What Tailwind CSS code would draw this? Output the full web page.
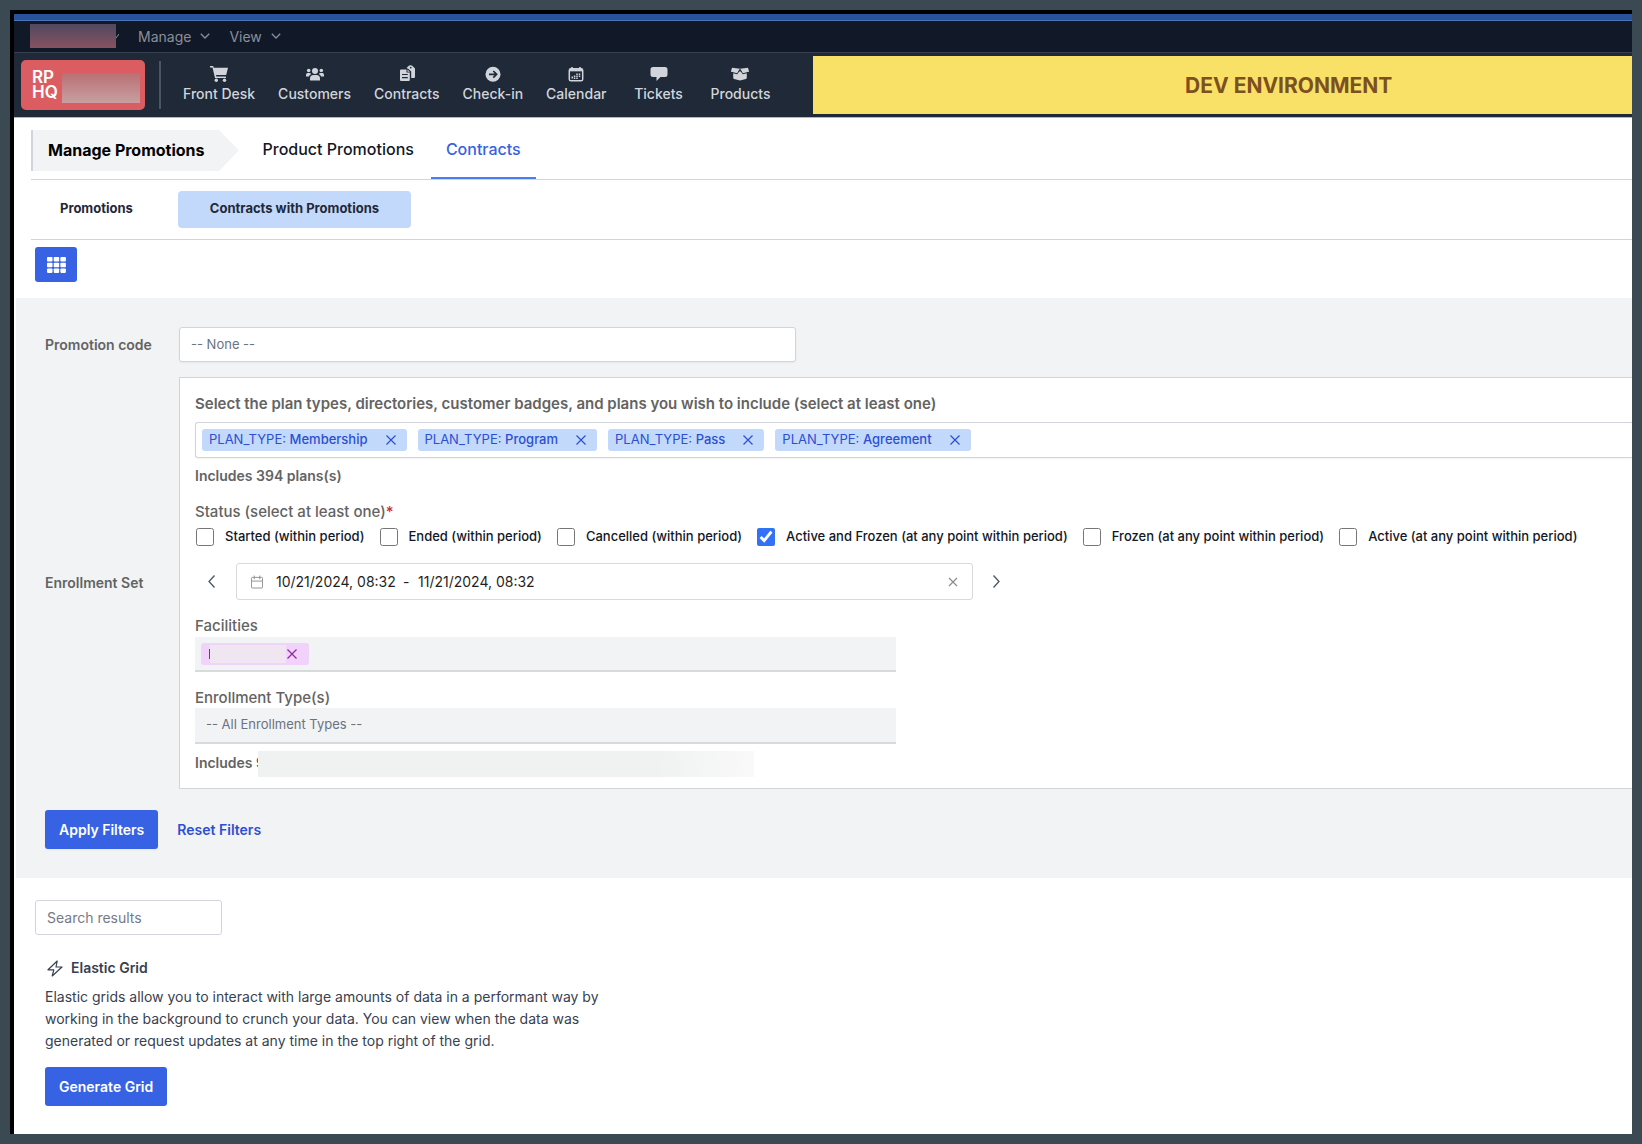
<!DOCTYPE html>
<html lang="en">
<head>
<meta charset="utf-8">
<meta name="viewport" content="width=device-width, initial-scale=1">
<title>Manage Promotions</title>
<script src="https://cdn.jsdelivr.net/npm/@tailwindcss/browser@4"></script>
</head>
<body class="flex min-h-screen flex-col bg-[#3b4a52] p-[10px] font-['Inter',sans-serif] text-[#111827]">
<div class="flex flex-1 flex-col overflow-hidden border-t-4 border-l-4 border-black bg-white">

  <!-- Top menu -->
  <header>
    <div class="h-[7px] border-b border-[#4a74b4] bg-[#28529a]"></div>
    <div class="flex h-8 items-center border-b border-[#374151] bg-[#111827] pb-px pl-4 text-[14px] text-[#8b8f98]">
      <div class="h-6 w-[86px] bg-linear-to-b from-[#51485f] to-[#85525f]"></div>
      <svg class="h-2 w-[3px]" viewBox="0 0 3 8" fill="none" stroke="currentColor"><path d="M0 6 3 2"/></svg>
      <button class="ml-[19px] flex items-center gap-[9px]">Manage
        <svg class="h-[6px] w-[10px]" viewBox="0 0 10 6" fill="none" stroke="currentColor" stroke-width="1.3"><path d="M.8.8 5 5 9.200.8"/></svg></button>
      <button class="ml-[19px] flex items-center gap-[9px]">View
        <svg class="h-[6px] w-[10px]" viewBox="0 0 10 6" fill="none" stroke="currentColor" stroke-width="1.3"><path d="M.8.8 5 5 9.200.8"/></svg></button>
    </div>

    <div class="flex h-16 items-stretch bg-[#1f2937]">
      <div class="mt-[7px] ml-[7px] flex h-[50px] w-[124px] items-center rounded-[5px] bg-[#db5d62] pl-[11px] text-[17px] leading-[15px] font-semibold text-white">
        <div class="w-[30px]"><div>RP</div><div>HQ</div></div>
        <div class="mt-[6px] h-[30px] w-[78px] bg-linear-to-b from-[#b97073] to-[#c79fa2]"></div>
      </div>
      <div class="mt-2 ml-[14px] h-12 w-[2px] bg-[#4b5563]"></div>
      <nav class="ml-[22px] flex gap-[23px] pt-3 text-[14px] leading-5 font-medium text-[#d1d5db]">
        <a href="#" class="flex flex-col items-center gap-px">
          <svg class="h-[18px] w-[18px]" viewBox="0 0 18 18" fill="currentColor"><path d="M0 1h3.200l.5 1.700H18l-1.800 7.300H6l.3 1.600h9.600v1.500H5L2.500 2.500H0z"/><circle cx="6.300" cy="15.300" r="1.700"/><circle cx="14.500" cy="15.300" r="1.700"/></svg>Front Desk</a>
        <a href="#" class="flex flex-col items-center gap-px">
          <svg class="h-[18px] w-[18px]" viewBox="0 0 18 18" fill="currentColor"><circle cx="9" cy="6" r="3"/><circle cx="2.700" cy="5.500" r="1.800"/><circle cx="15.300" cy="5.500" r="1.800"/><path d="M4 15v-1.500Q4 10 7.500 10h3Q14 10 14 13.500V15q0 .5-.5.5h-9Q4 15.500 4 15zM0 11V9.800Q0 8 1.800 8h1.800q.8 0 1.300.4L5 9.200Q3.200 10 3 11.500H.5Q0 11.500 0 11zM18 11V9.800Q18 8 16.200 8h-1.800q-.8 0-1.300.4l-.1.8q1.800.8 2 2.300h2.500q.5 0 .5-.5z"/></svg>Customers</a>
        <a href="#" class="flex flex-col items-center gap-px">
          <svg class="h-[18px] w-[18px]" viewBox="0 0 18 18"><path d="M8.500 3 10 1.500Q11 .3 12.700.3T15.500 2L17 3.500V12q0 1-1 1h-2.800V6.500L10.500 4z" fill="currentColor"/><circle cx="12.700" cy="2.600" r=".9" fill="#1f2937"/><path d="M3 4.500h5.500v3h3.300V15q0 1-1 1H3q-1 0-1-1V5.500q0-1 1-1zM9.500 4.500l2.300 2.200H9.500z" fill="currentColor"/><path d="M4 9.500h5.800M4 12.700h5.800" stroke="#1f2937" stroke-width="1.200"/></svg>Contracts</a>
        <a href="#" class="flex flex-col items-center gap-px">
          <svg class="h-[18px] w-[18px]" viewBox="0 0 18 18"><circle cx="9" cy="9.300" r="7.500" fill="currentColor"/><path d="M5 9.300h7.500M9.300 6l3.300 3.300L9.300 12.600" fill="none" stroke="#1f2937" stroke-width="1.700"/></svg>Check-in</a>
        <a href="#" class="flex flex-col items-center gap-px">
          <svg class="h-[18px] w-[18px]" viewBox="0 0 18 18" fill="none" stroke="currentColor"><rect x="2.300" y="3.800" width="13.400" height="12" rx="1.600" stroke-width="1.500"/><path d="M2.300 5.200h13.400" stroke-width="2.300"/><path d="M5 2v3M13 2v3" stroke-width="1.600"/><path d="M5.300 11.500v2.500M7.600 10.500V14M10 8.500V14M12.500 8.500v4" stroke-width="1.500" stroke-dasharray="1.500 .5"/></svg>Calendar</a>
        <a href="#" class="flex min-w-[58px] flex-col items-center gap-px">
          <svg class="h-[18px] w-[18px]" viewBox="0 0 18 18" fill="currentColor"><path d="M3 2h12q2.500 0 2.500 2.500v5q0 2.500-2.500 2.500h-4.500L6.500 16v-4H3Q.5 12 .5 9.500v-5Q.5 2 3 2z"/></svg>Tickets</a>
        <a href="#" class="flex min-w-[58px] flex-col items-center gap-px">
          <svg class="h-[18px] w-[18px]" viewBox="0 0 18 18"><path d="M2.200 6.500v6.200q0 1 .9 1.300L9 15.500l5.900-1.500q.9-.3.9-1.300V6.500z" fill="currentColor"/><path d="M1 2.800 9 3.800l8-1 1 3.400q.1.600-.5.800L12 8.500 9 4.200 6 8.500.5 7Q-.1 6.800 0 6.200z" fill="currentColor"/><path d="M.5 7.300 6.200 8.800 9 4.300l2.800 4.500 5.700-1.500" fill="none" stroke="#1f2937" stroke-width="1"/></svg>Products</a>
      </nav>
      <div class="my-[3px] ml-[43px] flex flex-1 items-center justify-center bg-[#f9e067] pt-px pl-[132px] text-[21px] font-bold text-[#7c501f]">DEV ENVIRONMENT</div>
    </div>
  </header>

  <main class="border-t border-[#b4b7bc]">
    <!-- Section tabs -->
    <nav class="ml-[17px] flex h-[62px] border-b border-[#d1d5db] pt-3 text-[16px] leading-6">
      <div class="flex h-[41px] items-center border-l-2 border-[#d1d5db] bg-[#f2f3f5] pr-[14px] pb-px pl-[15px] font-bold text-black">Manage Promotions</div>
      <svg class="h-[41px] w-5" viewBox="0 0 20 41"><path d="M0 0 20 20.500 0 41z" fill="#f2f3f5"/></svg>
      <a href="#" class="ml-2 h-[49px] pt-[7px] pr-[17px] pl-4 font-medium">Product Promotions</a>
      <a href="#" class="h-[49px] border-b-2 border-[#4b7ef0] px-[15px] pt-[7px] font-medium text-[#3662e3]">Contracts</a>
    </nav>
    <nav class="ml-[17px] flex h-[60px] items-center border-b border-[#d1d5db] text-[13px] font-bold text-[#1f2937]">
      <a href="#" class="flex h-[37px] items-center px-[29px] pb-px">Promotions</a>
      <a href="#" class="ml-4 flex h-[37px] items-center rounded-[4px] bg-[#c3d9fb] px-8 pb-px">Contracts with Promotions</a>
    </nav>

    <div class="px-[21px] pt-[7px] pb-4">
      <button aria-label="Grid" class="flex h-[35px] w-[42px] items-center justify-center rounded-[3px] bg-[#3662e3] text-white">
        <svg class="h-4 w-[19px]" viewBox="0 0 19 16" fill="currentColor"><rect width="5.500" height="4.500" rx=".8"/><rect x="6.700" width="5.500" height="4.500" rx=".8"/><rect x="13.400" width="5.500" height="4.500" rx=".8"/><rect y="5.700" width="5.500" height="4.500" rx=".8"/><rect x="6.700" y="5.700" width="5.500" height="4.500" rx=".8"/><rect x="13.400" y="5.700" width="5.500" height="4.500" rx=".8"/><rect y="11.400" width="5.500" height="4.500" rx=".8"/><rect x="6.700" y="11.400" width="5.500" height="4.500" rx=".8"/><rect x="13.400" y="11.400" width="5.500" height="4.500" rx=".8"/></svg>
      </button>
    </div>

    <!-- Filters -->
    <form class="ml-[2px] bg-[#f2f3f5] pt-[29px] pb-[29px] pl-[29px]">
      <div class="flex items-center">
        <label for="promo" class="w-[134px] text-[14px] font-semibold text-[#636363]">Promotion code</label>
        <select id="promo" class="h-[35px] w-[617px] appearance-none rounded-[3px] border border-[#d1d5db] bg-white px-[11px] text-[13px] text-[#6b7280] shadow-xs"><option>-- None --</option></select>
      </div>

      <div class="mt-[15px] flex items-center">
        <div class="w-[134px] shrink-0 pb-[2px] text-[14px] font-semibold text-[#636363]">Enrollment Set</div>
        <div class="min-w-0 flex-1 border border-r-0 border-[#d1d5db] bg-white pt-4 pb-[11px] pl-[15px]">
          <div class="text-[15px] leading-5 font-semibold text-[#636363]">Select the plan types, directories, customer badges, and plans you wish to include (select at least one)</div>
          <div class="mt-2 flex h-[36px] items-center gap-[11px] rounded-l-[3px] border border-r-0 border-[#d1d5db] pl-[6px] text-[13px] text-[#2c4fd2] shadow-xs">
            <span class="flex h-[22px] items-center rounded-[3px] bg-[#c3d9fb] pr-[11px] pl-[7px]"><span>PLAN_TYPE: <span class="font-medium">Membership</span></span><button type="button" aria-label="Remove" class="ml-[18px]"><svg class="size-[10px]" viewBox="0 0 10 10" stroke="currentColor" stroke-width="1.200"><path d="m.5.5 9 9m0-9-9 9"/></svg></button></span>
            <span class="flex h-[22px] items-center rounded-[3px] bg-[#c3d9fb] pr-[11px] pl-[7px]"><span>PLAN_TYPE: <span class="font-medium">Program</span></span><button type="button" aria-label="Remove" class="ml-[18px]"><svg class="size-[10px]" viewBox="0 0 10 10" stroke="currentColor" stroke-width="1.200"><path d="m.5.5 9 9m0-9-9 9"/></svg></button></span>
            <span class="flex h-[22px] items-center rounded-[3px] bg-[#c3d9fb] pr-[11px] pl-[7px]"><span>PLAN_TYPE: <span class="font-medium">Pass</span></span><button type="button" aria-label="Remove" class="ml-[18px]"><svg class="size-[10px]" viewBox="0 0 10 10" stroke="currentColor" stroke-width="1.200"><path d="m.5.5 9 9m0-9-9 9"/></svg></button></span>
            <span class="flex h-[22px] items-center rounded-[3px] bg-[#c3d9fb] pr-[11px] pl-[7px]"><span>PLAN_TYPE: <span class="font-medium">Agreement</span></span><button type="button" aria-label="Remove" class="ml-[18px]"><svg class="size-[10px]" viewBox="0 0 10 10" stroke="currentColor" stroke-width="1.200"><path d="m.5.5 9 9m0-9-9 9"/></svg></button></span>
          </div>
          <div class="mt-2 text-[14px] leading-5 font-semibold text-[#636363]">Includes 394 plans(s)</div>

          <fieldset>
            <legend class="pt-4 text-[15px] leading-5 font-medium text-[#636363]">Status (select at least one)<span class="text-[#d12c2c]">*</span></legend>
            <div class="mt-[5px] flex h-5 items-center gap-[15px] text-[13px] font-medium whitespace-nowrap">
              <label class="flex items-center gap-[11px]"><input type="checkbox" class="ml-px size-[18px] accent-[#3273f6]">Started (within period)</label>
              <label class="flex items-center gap-[11px]"><input type="checkbox" class="size-[18px] accent-[#3273f6]">Ended (within period)</label>
              <label class="flex items-center gap-[11px]"><input type="checkbox" class="size-[18px] accent-[#3273f6]">Cancelled (within period)</label>
              <label class="flex items-center gap-[11px]"><input type="checkbox" checked class="size-[18px] accent-[#3273f6]">Active and Frozen (at any point within period)</label>
              <label class="flex items-center gap-[11px]"><input type="checkbox" class="size-[18px] accent-[#3273f6]">Frozen (at any point within period)</label>
              <label class="flex items-center gap-[11px]"><input type="checkbox" class="size-[18px] accent-[#3273f6]">Active (at any point within period)</label>
            </div>
          </fieldset>

          <div class="mt-4 flex items-center">
            <button type="button" aria-label="Previous period" class="flex w-[41px] justify-center pr-2 text-[#4b5563]"><svg class="h-[13px] w-[7px]" viewBox="0 0 7 13" fill="none" stroke="currentColor" stroke-width="1.300"><path d="M6.500.5 1 6.500l5.500 6"/></svg></button>
            <div class="flex h-[37px] w-[737px] items-center rounded-[3px] border border-[#d9d9d9] px-[14px] text-[14px] text-[#1f1f1f]">
              <svg class="h-[14px] w-[12px] text-[#8c8c8c]" viewBox="0 0 13 14" fill="none" stroke="currentColor"><rect x=".5" y="2" width="12" height="11.500" rx="1"/><path d="M.5 6h12M3.500 0v4M9.500 0v4"/></svg>
              <input aria-label="Start" value="10/21/2024, 08:32" class="ml-[13px] w-[125px]">
              <span class="w-[17px] pl-[2px]">-</span>
              <input aria-label="End" value="11/21/2024, 08:32" class="w-[125px]">
              <button type="button" aria-label="Clear" class="ml-auto text-[#8c8c8c]"><svg class="size-[10px]" viewBox="0 0 10 10" stroke="currentColor" stroke-width="1.200"><path d="m1 1 8 8m0-8-8 8"/></svg></button>
            </div>
            <button type="button" aria-label="Next period" class="ml-5 text-[#4b5563]"><svg class="h-[13px] w-[7px]" viewBox="0 0 7 13" fill="none" stroke="currentColor" stroke-width="1.300"><path d="m.5.5 5.500 6-5.500 6"/></svg></button>
          </div>

          <div class="mt-4 text-[15px] leading-5 font-medium text-[#636363]">Facilities</div>
          <div class="mt-px flex h-[35px] w-[701px] items-center border-b-2 border-[#d9dade] bg-[#f2f3f5] pl-[6px]">
            <span class="flex h-[22px] w-[108px] items-center rounded-[3px] bg-[#f0d2fb] pl-2 text-[#8f259f]">
              <span class="h-[10px] w-px bg-[#8f259f]"></span>
              <span class="h-[18px] w-[76px] bg-[#efe6f2]"></span>
              <button type="button" aria-label="Remove" class="ml-px"><svg class="size-[10px]" viewBox="0 0 10 10" stroke="currentColor" stroke-width="1.200"><path d="m.5.5 9 9m0-9-9 9"/></svg></button>
            </span>
          </div>

          <label for="types" class="mt-4 block text-[15px] leading-5 font-medium text-[#636363]">Enrollment Type(s)</label>
          <select id="types" class="block h-[36px] w-[701px] appearance-none border-b-2 border-[#d9dade] bg-[#f2f3f5] px-[11px] text-[13px] text-[#6b7280]"><option>-- All Enrollment Types --</option></select>
          <div class="mt-[7px] flex h-[26px] items-center text-[14px] leading-5 font-semibold text-[#636363]"><span class="pb-[2px]">Includes 9</span><span class="relative -ml-[7px] h-[26px] w-[496px] bg-linear-to-r from-[#f0f1f1] from-80% to-[#f9f9f9]"></span></div>
        </div>
      </div>

      <div class="mt-[21px] flex items-center text-[14px] font-semibold">
        <button type="button" class="h-[39px] rounded-[3px] bg-[#3662e3] px-[14px] text-white shadow-xs">Apply Filters</button>
        <button type="reset" class="ml-[19px] text-[#2c4fd2]">Reset Filters</button>
      </div>
    </form>

    <!-- Results -->
    <section class="px-[21px] pt-[22px]">
      <input type="search" aria-label="Search results" placeholder="Search results" class="h-[35px] w-[187px] rounded-[3px] border border-[#d1d5db] px-[11px] text-[14px] placeholder:text-[#757b85]">
      <div class="px-[10px] pt-[23px] text-[14px] text-[#374151]">
        <h2 class="flex items-center gap-2 pl-[2px] leading-5 font-semibold"><svg class="h-[17px] w-[16px]" viewBox="0 0 16 17" fill="none" stroke="currentColor" stroke-width="1.200" stroke-linejoin="round"><path d="M10.200 1 1 9.800h5.800L5.200 16 15 7H9z"/></svg>Elastic Grid</h2>
        <p class="mt-2 w-[580px] leading-[22px]">Elastic grids allow you to interact with large amounts of data in a performant way by working in the background to crunch your data. You can view when the data was generated or request updates at any time in the top right of the grid.</p>
        <button class="mt-[15px] h-[39px] rounded-[3px] bg-[#3662e3] px-[14px] font-semibold text-white">Generate Grid</button>
      </div>
    </section>
  </main>
</div>
</body>
</html>
